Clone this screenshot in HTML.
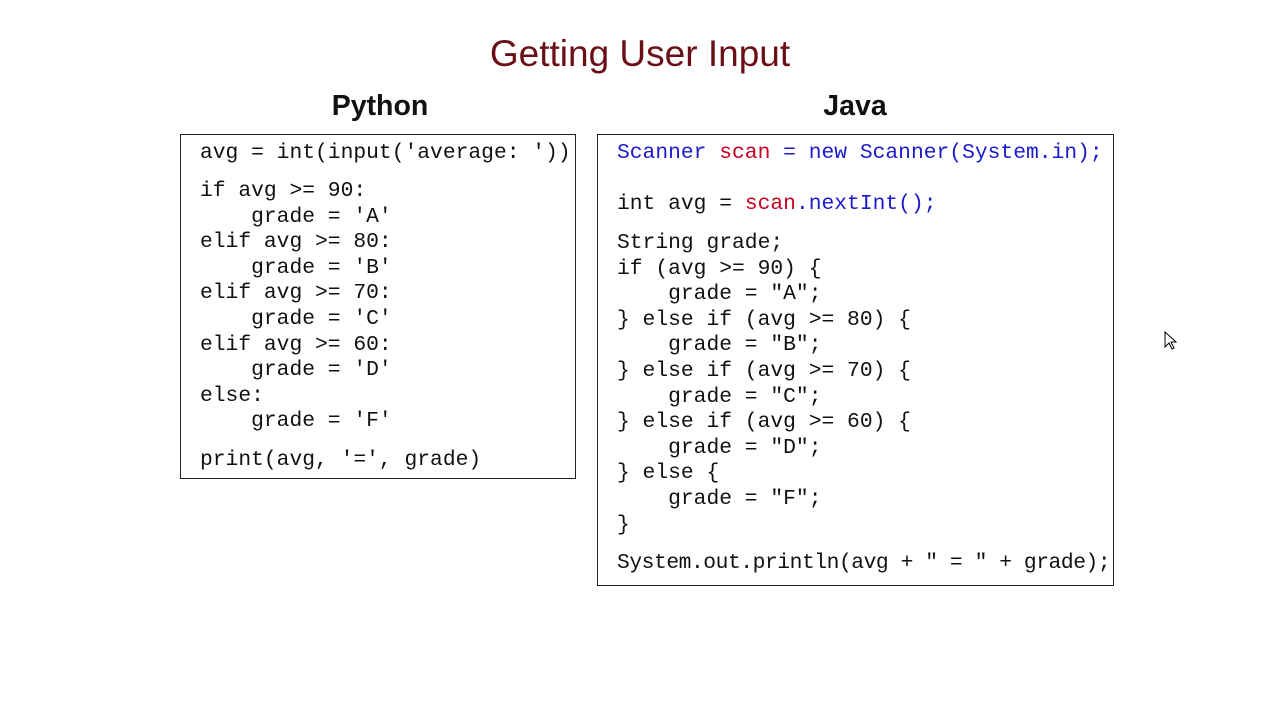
<!DOCTYPE html>
<html><head><meta charset="utf-8"><style>
body{margin:0;width:1280px;height:720px;background:#fff;position:relative;overflow:hidden;font-family:"Liberation Sans",sans-serif}
.t{position:absolute;white-space:pre}
.c{position:absolute;white-space:pre;font-family:"Liberation Mono",monospace;font-size:21.3px;line-height:25.6px;color:#111}
.box{position:absolute;border:1px solid #222;box-sizing:border-box}
.b{color:#1a1acc}.r{color:#cc0022}
</style></head><body>
<div class="t" style="left:0;width:1280px;text-align:center;top:33px;font-size:37px;color:#6b0f17">Getting User Input</div>
<div class="t" style="left:280px;width:200px;text-align:center;top:90px;font-size:28.5px;font-weight:bold;color:#111">Python</div>
<div class="t" style="left:755px;width:200px;text-align:center;top:90px;font-size:28.5px;font-weight:bold;color:#111">Java</div>
<div class="box" style="left:180px;top:134px;width:396px;height:345px"></div>
<div class="box" style="left:597px;top:134px;width:517px;height:452px"></div>

<div class="c" style="left:200px;top:141px">avg = int(input('average: '))</div>
<div class="c" style="left:200px;top:179px">if avg &gt;= 90:
    grade = 'A'
elif avg &gt;= 80:
    grade = 'B'
elif avg &gt;= 70:
    grade = 'C'
elif avg &gt;= 60:
    grade = 'D'
else:
    grade = 'F'</div>
<div class="c" style="left:200px;top:448px">print(avg, '=', grade)</div>

<div class="c" style="left:617px;top:141px"><span class="b">Scanner</span> <span class="r">scan</span> <span class="b">= new Scanner(System.in);</span></div>
<div class="c" style="left:617px;top:192px">int avg = <span class="r">scan</span><span class="b">.nextInt();</span></div>
<div class="c" style="left:617px;top:231px">String grade;
if (avg &gt;= 90) {
    grade = "A";
} else if (avg &gt;= 80) {
    grade = "B";
} else if (avg &gt;= 70) {
    grade = "C";
} else if (avg &gt;= 60) {
    grade = "D";
} else {
    grade = "F";
}</div>
<div class="c" style="left:617px;top:551px;letter-spacing:-0.45px">System.out.println(avg + " = " + grade);</div>

<svg style="position:absolute;left:1164px;top:331px" width="16" height="20" viewBox="0 0 16 20"><path d="M1 1 L1 16 L5 12 L8 18 L10 17 L7 11 L12 11 Z" fill="#fff" stroke="#000" stroke-width="1"/></svg>
</body></html>
